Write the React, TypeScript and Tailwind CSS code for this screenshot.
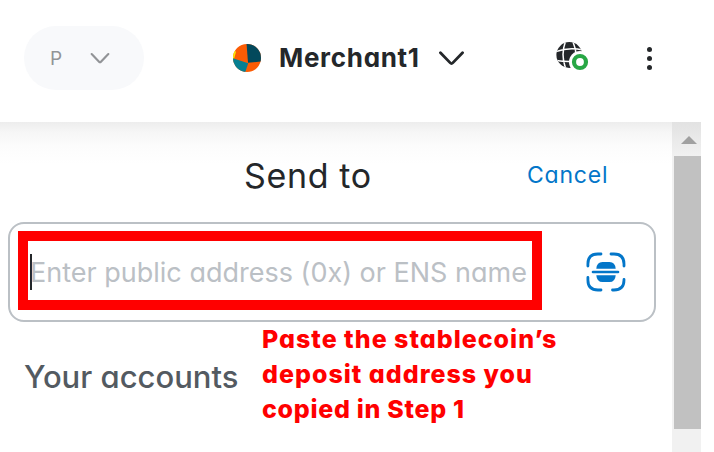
function Chevron({ className }: { className: string }) {
  return (
    <svg viewBox="0 0 24 14" fill="none" stroke="currentColor" strokeLinecap="round" strokeLinejoin="round" className={className}>
      <path d="M1.4 1.4 L10.8 11.2 Q12 12.5 13.2 11.2 L22.6 1.4" strokeWidth="2.7" />
    </svg>
  );
}

function Avatar() {
  return (
    <svg viewBox="0 0 28 28" className="ml-[89px] h-7 w-7 shrink-0">
      <defs>
        <clipPath id="avatar">
          <circle cx="14" cy="14" r="14" />
        </clipPath>
      </defs>
      <g clipPath="url(#avatar)">
        <path d="M0 0H28V28H0Z" fill="#fc5c04" />
        <path d="M0 4L3 8L1 15L0 15Z" fill="#f9e405" />
        <path d="M13.5 -1H29V17.5L15 18.7Z" fill="#03495c" />
        <path d="M-1 14L15.2 19.3L12 29H-1Z" fill="#067f91" />
      </g>
    </svg>
  );
}

function Globe() {
  return (
    <svg viewBox="0 0 34 32" className="ml-[92px] h-8 w-[34px] shrink-0">
      <defs>
        <clipPath id="globe">
          <circle cx="13.3" cy="13" r="12.9" />
        </clipPath>
      </defs>
      <g clipPath="url(#globe)">
        <rect width="27" height="27" fill="#24272a" />
        <g fill="none" stroke="white" strokeWidth="1.5">
          <path d="M0 9.5Q13 5 27 8M0 18.5Q13 20.5 27 18.5M9.3 0Q4.5 13 9.8 27M17 0Q20 7 20 13" />
        </g>
      </g>
      <circle cx="24" cy="20" r="11" fill="white" />
      <circle cx="24" cy="20" r="6" fill="white" stroke="#28a745" strokeWidth="4.2" />
    </svg>
  );
}

function ScanIcon() {
  return (
    <svg viewBox="0 0 40 40" className="mr-[28px] h-10 w-10 shrink-0">
      <g fill="none" stroke="#0376c9" strokeWidth="2.8" strokeLinecap="round">
        <path d="M1.9 14V12Q1.9 2 11.9 2H15M25 2H28Q38 2 38 12V14M1.9 25.5V28Q1.9 38 11.9 38H15M26.5 38H28Q38 38 38 28V27.5" />
        <path d="M7 20H32" strokeWidth="2.6" />
      </g>
      <path d="M10.3 16.8Q10.8 10 16.5 10H23.5Q29.2 10 29.7 16.8ZM10.3 23.2Q10.8 30 16.5 30H23.5Q29.2 30 29.7 23.2Z" fill="#0376c9" />
    </svg>
  );
}

export default function App() {
  return (
    <div className="flex h-[452px] w-[714px] flex-col overflow-hidden bg-white font-['Inter',sans-serif] text-[#24272a] [font-feature-settings:'cv11']">
      <header className="flex h-[122px] shrink-0 items-start pt-[26px]">
        <div className="ml-6 flex h-16 w-[120px] shrink-0 items-center rounded-full bg-[#f8f9fb] pl-[26px] text-[#929497]">
          <span className="w-[40px] text-[19px] leading-none">P</span>
          <Chevron className="h-[11px] w-[20px]" />
        </div>
        <div className="flex h-16 items-center">
          <Avatar />
          <span className="ml-[18px] w-[160px] text-[26px] leading-none font-bold tracking-[0.7px] whitespace-nowrap">Merchant1</span>
          <Chevron className="h-[15px] w-[25px] shrink-0" />
          <Globe />
          <div className="ml-[57px] flex flex-col gap-1">
            <i className="h-[5px] w-[5px] rounded-full bg-[#24272a]" />
            <i className="h-[5px] w-[5px] rounded-full bg-[#24272a]" />
            <i className="h-[5px] w-[5px] rounded-full bg-[#24272a]" />
          </div>
        </div>
      </header>
      <div className="flex h-[330px]">
        <main className="flex w-[672px] flex-col bg-[linear-gradient(to_bottom,#ededed_0,#f6f6f6_10px,#fcfcfc_24px,#ffffff_42px)] bg-no-repeat">
          <div className="flex h-[100px] items-center pt-[6px] whitespace-nowrap">
            <h1 className="ml-[244px] w-[283px] pt-[2px] text-[34px] leading-none tracking-[0.65px]">Send to</h1>
            <button className="text-[23px] leading-none tracking-[0.8px] text-[#0376c9]">Cancel</button>
          </div>
          <div className="ml-2 flex h-[100px] w-[648px] shrink-0 items-center justify-between rounded-2xl border-2 border-[#bbc0c5] bg-white pl-2">
            <div className="-mt-[3px] flex h-[79px] w-[524px] items-center border-[10px] border-[#ff0000] pt-[3px] pl-[2px] whitespace-nowrap">
              <i className="h-9 w-[2px] bg-[#24272a]" />
              <span className="-ml-[2px] text-[27px] leading-none text-[#bbc0c5]">Enter public address (0x) or ENS name</span>
            </div>
            <ScanIcon />
          </div>
          <div className="flex whitespace-nowrap">
            <h2 className="mt-[39px] ml-6 w-[238px] text-[31px] leading-none font-medium text-[#535a61]">Your accounts</h2>
            <p className="text-[25px] leading-[35px] font-extrabold tracking-[1px] text-[#ff0000]">
              Paste the stablecoin’s
              <br />
              deposit address you
              <br />
              <span className="tracking-[0.7px]">copied in Step 1</span>
            </p>
          </div>
        </main>
        <aside className="flex w-[29px] flex-col items-end bg-[linear-gradient(to_bottom,#e2e2e2,#f1f1f1_34px)]">
          <div className="flex h-[34px] w-[27px] items-center justify-center pt-[2px] pl-[3px]">
            <svg viewBox="0 0 16 8" className="h-2 w-4"><path d="M8 0L16 8H0Z" fill="#a0a0a0" /></svg>
          </div>
          <div className="h-[273px] w-[27px] bg-[#c1c1c1]" />
        </aside>
      </div>
    </div>
  );
}
